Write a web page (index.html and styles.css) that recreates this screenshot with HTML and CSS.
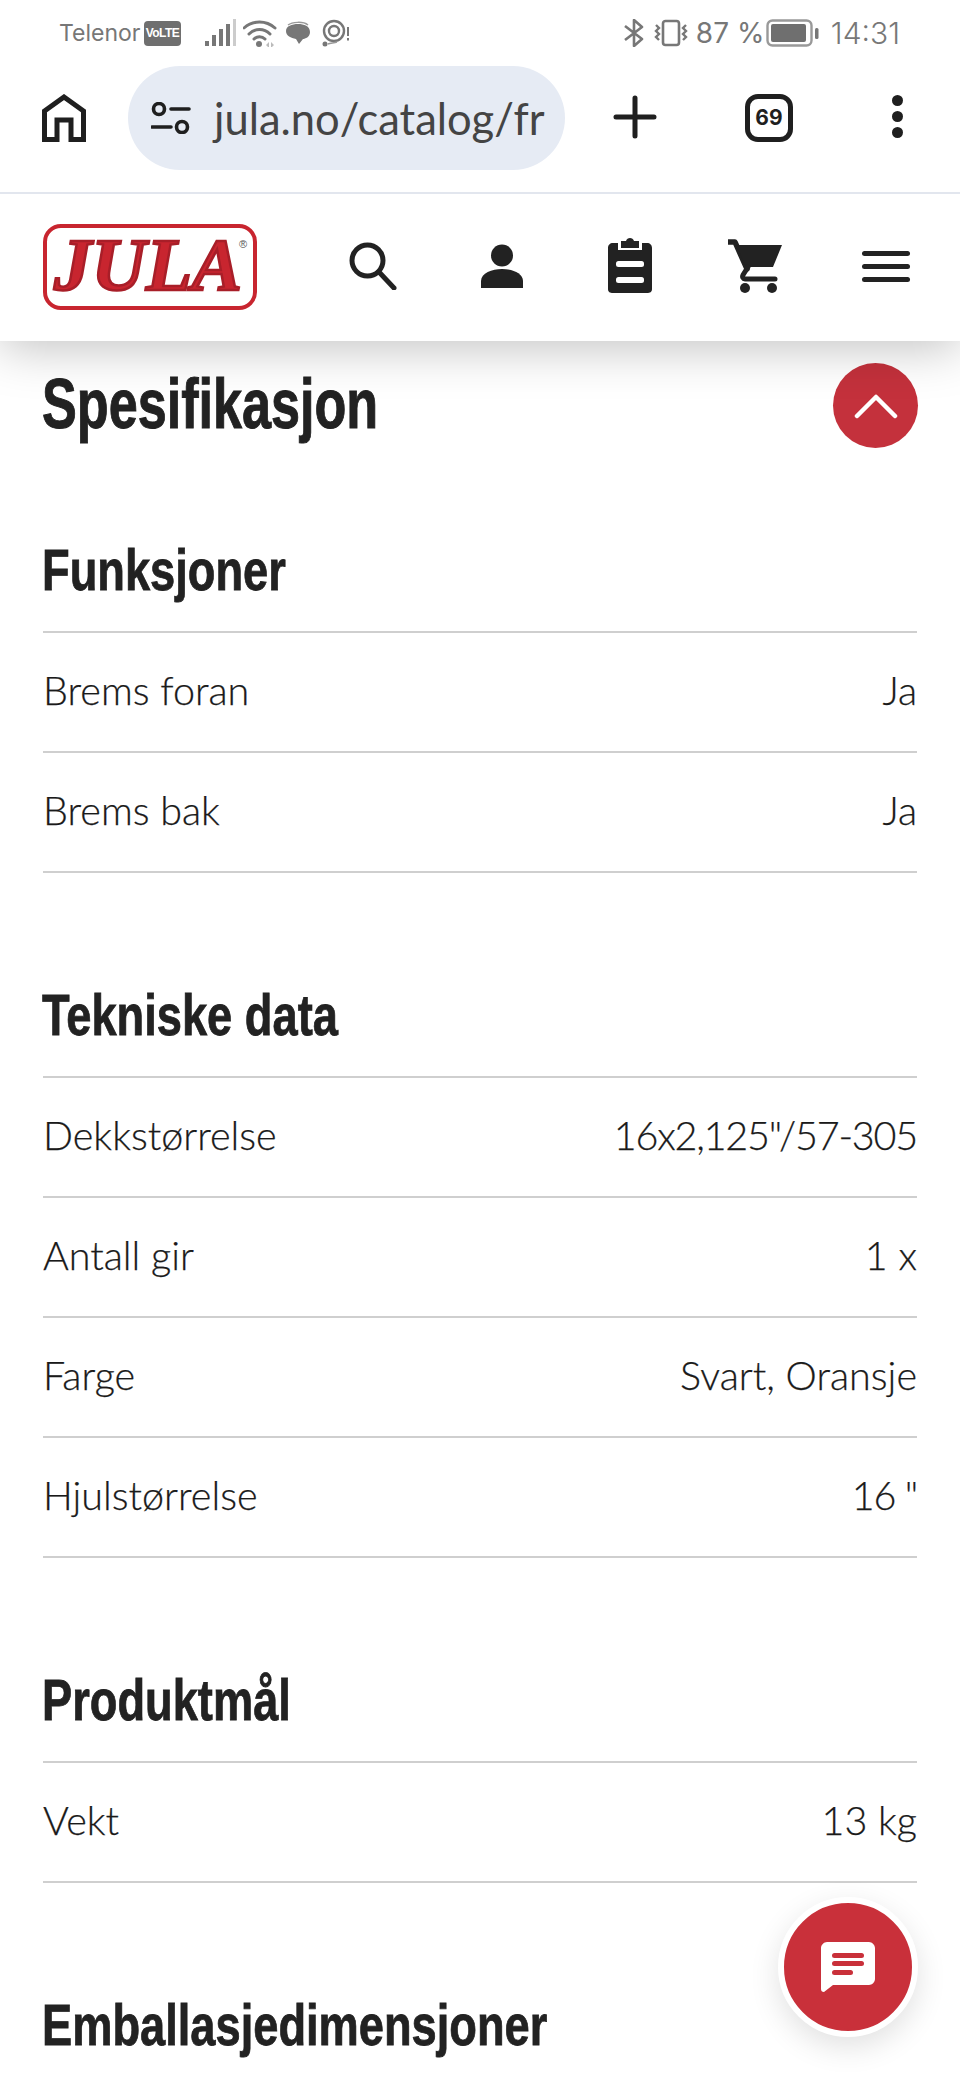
FILE: index.html
```html
<!DOCTYPE html>
<html lang="no">
<head>
    <meta charset="UTF-8">
    <title>Jula - Spesifikasjon</title>
    <link rel="stylesheet" href="styles.css">
</head>
<body>

    <div class="statusbar">
        <div class="status-left">
            <span class="carrier">Telenor</span>
            <span class="volte">VoLTE</span>
            <svg class="st-signal" width="32" height="28" viewBox="0 0 32 28">
                <rect x="0" y="22" width="4" height="5" fill="#777"/>
                <rect x="7" y="16" width="4" height="11" fill="#777"/>
                <rect x="14" y="10" width="4" height="17" fill="#777"/>
                <rect x="21" y="5" width="4" height="22" fill="#777"/>
                <rect x="28" y="0" width="3" height="27" fill="#ccc"/>
            </svg>
            <svg class="st-wifi" width="34" height="28" viewBox="0 0 34 28">
                <path d="M1 9C10 1 23 1 32 9" fill="none" stroke="#777" stroke-width="3" stroke-linecap="round"/>
                <path d="M6 15C12 9 21 9 27 15" fill="none" stroke="#777" stroke-width="3" stroke-linecap="round"/>
                <path d="M11 20C14 17 19 17 22 20" fill="none" stroke="#777" stroke-width="3" stroke-linecap="round"/>
                <circle cx="16" cy="25" r="3" fill="#777"/>
                <path d="M23 26l3-3v6zM28 23l3 3-3 3z" fill="#bbb"/>
            </svg>
            <svg class="st-bubble" width="24" height="24" viewBox="0 0 24 24">
                <path d="M12 3C18 3 24 5 24 11C24 16 19 18 17 18L13 23L10 18C5 17 0 15 0 10C0 5 6 3 12 3Z" fill="#777"/>
                <path d="M2 4C6 1 17 0 22 4" fill="none" stroke="#999" stroke-width="1.5"/>
            </svg>
            <svg class="st-target" width="28" height="28" viewBox="0 0 28 28">
                <circle cx="12" cy="12" r="10" fill="none" stroke="#777" stroke-width="2.4"/>
                <circle cx="12" cy="12" r="5" fill="none" stroke="#777" stroke-width="2.4"/>
                <circle cx="3" cy="25" r="2.5" fill="#777"/>
                <path d="M6 25C8 24 12 24 15 23" fill="none" stroke="#999" stroke-width="1.5"/>
                <rect x="25" y="8" width="2" height="9" fill="#777"/>
                <rect x="25" y="19" width="2" height="2.5" fill="#777"/>
            </svg>
        </div>
        <div class="status-right">
            <svg class="st-bt" width="20" height="28" viewBox="0 0 20 28">
                <path d="M1 7L18 20L10 27V1L18 8L1 21" fill="none" stroke="#777" stroke-width="2.6" stroke-linejoin="round"/>
            </svg>
            <svg class="st-vib" width="36" height="28" viewBox="0 0 36 28">
                <rect x="10" y="2" width="16" height="24" rx="2.5" fill="none" stroke="#777" stroke-width="2.6"/>
                <path d="M3 6l3 3-3 3 3 3-3 3 3 3M33 6l-3 3 3 3-3 3 3 3-3 3" fill="none" stroke="#777" stroke-width="2.4"/>
            </svg>
            <span class="pct">87 %</span>
            <svg class="st-batt" width="53" height="28" viewBox="0 0 53 28">
                <rect x="1.5" y="1.5" width="44" height="25" rx="5" fill="none" stroke="#999" stroke-width="2.4"/>
                <rect x="5" y="5" width="35" height="18" rx="2" fill="#6f6f6f"/>
                <rect x="49" y="9" width="3.5" height="11" rx="1.5" fill="#777"/>
            </svg>
            <span class="clock">14:31</span>
        </div>
    </div>

    <div class="toolbar">
        <svg class="tb-home" width="44" height="48" viewBox="0 0 44 48">
            <path d="M2.5 45.500V17L22 3L41.500 17V45.500H29V26H15V45.500Z" fill="none" stroke="#1f1f1f" stroke-width="5"/>
        </svg>
        <div class="urlbar">
            <svg class="tb-sliders" width="40" height="32" viewBox="0 0 40 32">
                <circle cx="8" cy="7" r="5.500" fill="none" stroke="#1f1f1f" stroke-width="3.600"/>
                <path d="M20 7H38M1 25H20" stroke="#1f1f1f" stroke-width="3.600" stroke-linecap="round"/>
                <circle cx="31" cy="25" r="5.500" fill="none" stroke="#1f1f1f" stroke-width="3.600"/>
            </svg>
            <span class="url">jula.no/catalog/fr</span>
        </div>
        <svg class="tb-plus" width="44" height="44" viewBox="0 0 44 44">
            <path d="M3 22H41M22 3V41" stroke="#1f1f1f" stroke-width="5" stroke-linecap="round"/>
        </svg>
        <div class="tabcount">69</div>
        <div class="tb-dots"><i></i><i></i><i></i></div>
    </div>

    <header class="site-header">
        <svg class="logo" width="214" height="86" viewBox="0 0 214 86">
            <rect x="2" y="2" width="210" height="82" rx="16" fill="#fff" stroke="#c8252f" stroke-width="4"/>
            <text class="logo-text" x="11" y="66" textLength="188" lengthAdjust="spacingAndGlyphs">JULA</text>
            <text class="logo-reg" x="196" y="24">®</text>
        </svg>
        <nav class="site-icons">
            <svg width="48" height="48" viewBox="0 0 48 48">
                <circle cx="18.500" cy="18.500" r="15.500" fill="none" stroke="#222" stroke-width="5"/>
                <path d="M30 30L45 46" stroke="#222" stroke-width="5" stroke-linecap="round"/>
            </svg>
            <svg width="44" height="44" viewBox="0 0 44 44">
                <ellipse cx="22" cy="11.500" rx="11" ry="11" fill="#222"/>
                <path d="M1 44V37C1 29 12 25 22 25C32 25 43 29 43 37V44Z" fill="#222"/>
            </svg>
            <svg width="44" height="56" viewBox="0 0 44 56">
                <path d="M5 6H10V13H34V6H39C42 6 44 8 44 11V52C44 55 42 56 39 56H5C2 56 0 55 0 52V11C0 8 2 6 5 6Z" fill="#222"/>
                <path d="M13 4H18C19 0 25 0 26 4H31V11H13Z" fill="#222"/>
                <rect x="8" y="24" width="28" height="6" rx="2.500" fill="#fff"/>
                <rect x="8" y="40" width="28" height="6" rx="2.500" fill="#fff"/>
            </svg>
            <svg width="54" height="54" viewBox="0 0 54 54">
                <path d="M1 3H7L19 30" fill="none" stroke="#222" stroke-width="5.500" stroke-linecap="round" stroke-linejoin="round"/>
                <path d="M8 6H54L45 28H18Z" fill="#222"/>
                <path d="M20 28L15 36C14 38 15 40 17 40H47" fill="none" stroke="#222" stroke-width="5" stroke-linecap="round"/>
                <circle cx="17" cy="49" r="5" fill="#222"/>
                <circle cx="44" cy="49" r="5" fill="#222"/>
            </svg>
            <div class="burger"><i></i><i></i><i></i></div>
        </nav>
    </header>

    <main class="content">
        <div class="spec-head">
            <h2>Spesifikasjon</h2>
            <button class="up-btn">
                <svg width="44" height="26" viewBox="0 0 44 26">
                    <path d="M3 23L22 4L41 23" fill="none" stroke="#fff" stroke-width="4.500" stroke-linecap="round" stroke-linejoin="round"/>
                </svg>
            </button>
        </div>

        <section class="spec-group first">
            <h3><span>Funksjoner</span></h3>
            <div class="spec-row"><span>Brems foran</span><span>Ja</span></div>
            <div class="spec-row"><span>Brems bak</span><span>Ja</span></div>
        </section>

        <section class="spec-group">
            <h3><span>Tekniske data</span></h3>
            <div class="spec-row"><span>Dekkstørrelse</span><span class="num">16x2,125"/57-305</span></div>
            <div class="spec-row"><span>Antall gir</span><span>1 x</span></div>
            <div class="spec-row"><span>Farge</span><span>Svart, Oransje</span></div>
            <div class="spec-row"><span>Hjulstørrelse</span><span class="num">16 "</span></div>
        </section>

        <section class="spec-group">
            <h3><span>Produktmål</span></h3>
            <div class="spec-row"><span>Vekt</span><span>13 kg</span></div>
        </section>

        <section class="spec-group">
            <h3 class="no-line"><span>Emballasjedimensjoner</span></h3>
        </section>
    </main>

    <button class="chat-btn">
        <svg width="54" height="50" viewBox="0 0 54 50">
            <path d="M6 0H48C51 0 54 3 54 6V37C54 40 51 43 48 43H12L3 50C1 50 0 49 0 47V6C0 3 3 0 6 0Z" fill="#fff"/>
            <rect x="11" y="11" width="32" height="5" rx="2.500" fill="#c9303a"/>
            <rect x="11" y="19" width="32" height="5" rx="2.500" fill="#c9303a"/>
            <rect x="11" y="28" width="21" height="5" rx="2.500" fill="#c9303a"/>
        </svg>
    </button>

</body>
</html>
```

FILE: styles.css
```css
html, body {
    margin: 0;
    padding: 0;
}
body {
    position: relative;
    width: 960px;
    height: 2080px;
    overflow: hidden;
    background: #fff;
    color: #222;
    font-family: Lato, "Liberation Sans", sans-serif;
}

/* phone status bar */
.statusbar {
    height: 66px;
    box-sizing: border-box;
    padding: 19px 60px 0 59px;
    display: flex;
    justify-content: space-between;
    align-items: flex-start;
    color: #777;
    background: #fff;
    position: relative;
    z-index: 3;
}
.status-left, .status-right {
    display: flex;
    align-items: center;
    height: 28px;
}
.carrier {
    font-family: Inter, "Liberation Sans", sans-serif;
    font-size: 23px;
    width: 85px;
}
.volte {
    width: 37px;
    height: 25px;
    line-height: 25px;
    background: #6f6f6f;
    color: #fff;
    border-radius: 4px;
    font-family: "Liberation Sans", sans-serif;
    font-weight: bold;
    font-size: 12px;
    letter-spacing: -.5px;
    text-align: center;
}
.st-signal { margin-left: 24px; }
.st-wifi { margin-left: 6px; }
.st-bubble { margin-left: 9px; }
.st-target { margin-left: 12px; }
.st-vib { margin-left: 9px; }
.pct {
    font-family: Inter, "Liberation Sans", sans-serif;
    font-size: 28px;
    margin-left: 7px;
    width: 64px;
    white-space: nowrap;
}
.st-batt { margin-left: 6px; }
.clock {
    font-family: Inter, "Liberation Sans", sans-serif;
    font-size: 30px;
    margin-left: 12px;
    font-weight: 300;
}

/* browser toolbar */
.toolbar {
    height: 128px;
    box-sizing: border-box;
    display: flex;
    align-items: flex-start;
    border-bottom: 2px solid #e2e6ee;
    background: #fff;
    position: relative;
    z-index: 3;
}
.tb-home {
    margin: 28px 0 0 42px;
}
.urlbar {
    margin-left: 42px;
    width: 437px;
    height: 104px;
    box-sizing: border-box;
    background: #e6ebf4;
    border-radius: 52px;
    display: flex;
    align-items: center;
    padding-left: 23px;
}
.url {
    margin-left: 23px;
    font-size: 43.5px;
    color: #444;
    white-space: nowrap;
}
.tb-plus {
    margin: 29px 0 0 48px;
}
.tabcount {
    margin: 28px 0 0 88px;
    width: 48px;
    height: 48px;
    box-sizing: border-box;
    border: 5px solid #1f1f1f;
    border-radius: 13px;
    text-align: center;
    line-height: 38px;
    font-family: Inter, "Liberation Sans", sans-serif;
    font-weight: 700;
    font-size: 21px;
    color: #1f1f1f;
}
.tb-dots {
    margin: 29px 0 0 99px;
    display: flex;
    flex-direction: column;
    gap: 5px;
}
.tb-dots i {
    display: block;
    width: 11px;
    height: 11px;
    border-radius: 50%;
    background: #1f1f1f;
}

/* jula header */
.site-header {
    height: 147px;
    box-sizing: border-box;
    padding-left: 43px;
    background: #fff;
    display: flex;
    align-items: center;
    position: relative;
    z-index: 2;
    box-shadow: 0 6px 50px rgba(0, 0, 0, .25);
}
.logo {
    flex: none;
    margin-top: -2px;
}
.logo-text {
    font-family: "Liberation Serif", serif;
    font-style: italic;
    font-weight: bold;
    font-size: 74px;
    fill: #c8252f;
    stroke: #a81e28;
    stroke-width: 2.5;
}
.logo-reg {
    font-family: "Liberation Sans", sans-serif;
    font-size: 11px;
    fill: #555;
}
.site-icons {
    display: flex;
    align-items: center;
    margin-left: 92px;
    margin-top: -3px;
    gap: 84px;
}
.site-icons svg:nth-child(2) { margin-left: -1px; }
.site-icons svg:nth-child(3) { margin-top: -2px; }
.site-icons svg:nth-child(4) { margin-left: -8px; }
.burger {
    display: flex;
    flex-direction: column;
    gap: 8px;
    margin-left: -4px;
}
.burger i {
    display: block;
    width: 48px;
    height: 5px;
    border-radius: 2.5px;
    background: #222;
}

/* spec list */
.content {
    padding: 0 43px;
}
.spec-head {
    height: 149px;
    display: flex;
    justify-content: space-between;
    align-items: flex-start;
}
h2 {
    margin: 25px 0 0 -1px;
    font-family: "Liberation Sans", sans-serif;
    font-weight: bold;
    font-size: 70px;
    line-height: 76px;
    color: #222;
    -webkit-text-stroke: 1px #222;
    transform: scaleX(.745);
    transform-origin: left center;
}
.up-btn {
    margin: 22px -1px 0 0;
    width: 85px;
    height: 85px;
    padding: 0;
    border: none;
    border-radius: 50%;
    background: #c4313c;
    display: flex;
    align-items: center;
    justify-content: center;
}
.spec-group {
    margin-top: 114px;
}
.spec-group.first {
    margin-top: 52px;
}
h3 {
    margin: 0;
    height: 56px;
    padding-bottom: 33px;
    border-bottom: 2px solid #cfcfcf;
    font-family: "Liberation Sans", sans-serif;
    font-weight: bold;
    font-size: 58px;
    line-height: 56px;
    white-space: nowrap;
    color: #222;
}
h3 span {
    display: inline-block;
    margin-left: -1px;
    -webkit-text-stroke: .8px #222;
    transform: scaleX(.78);
    transform-origin: left center;
}
.no-line {
    border-bottom: none;
}
.spec-row {
    height: 120px;
    box-sizing: border-box;
    padding-bottom: 6px;
    border-bottom: 2px solid #cfcfcf;
    display: flex;
    justify-content: space-between;
    align-items: center;
    font-size: 39.5px;
    font-weight: 300;
    color: #1a1a1a;
    -webkit-text-stroke: .25px #1a1a1a;
}
.num {
    letter-spacing: -1.2px;
}

/* chat */
.chat-btn {
    position: absolute;
    left: 778px;
    top: 1897px;
    width: 140px;
    height: 140px;
    padding: 0;
    box-sizing: border-box;
    border: 6px solid #fff;
    border-radius: 50%;
    background: #c9303a;
    box-shadow: 0 10px 30px rgba(0, 0, 0, .12);
    display: flex;
    align-items: center;
    justify-content: center;
}
```
